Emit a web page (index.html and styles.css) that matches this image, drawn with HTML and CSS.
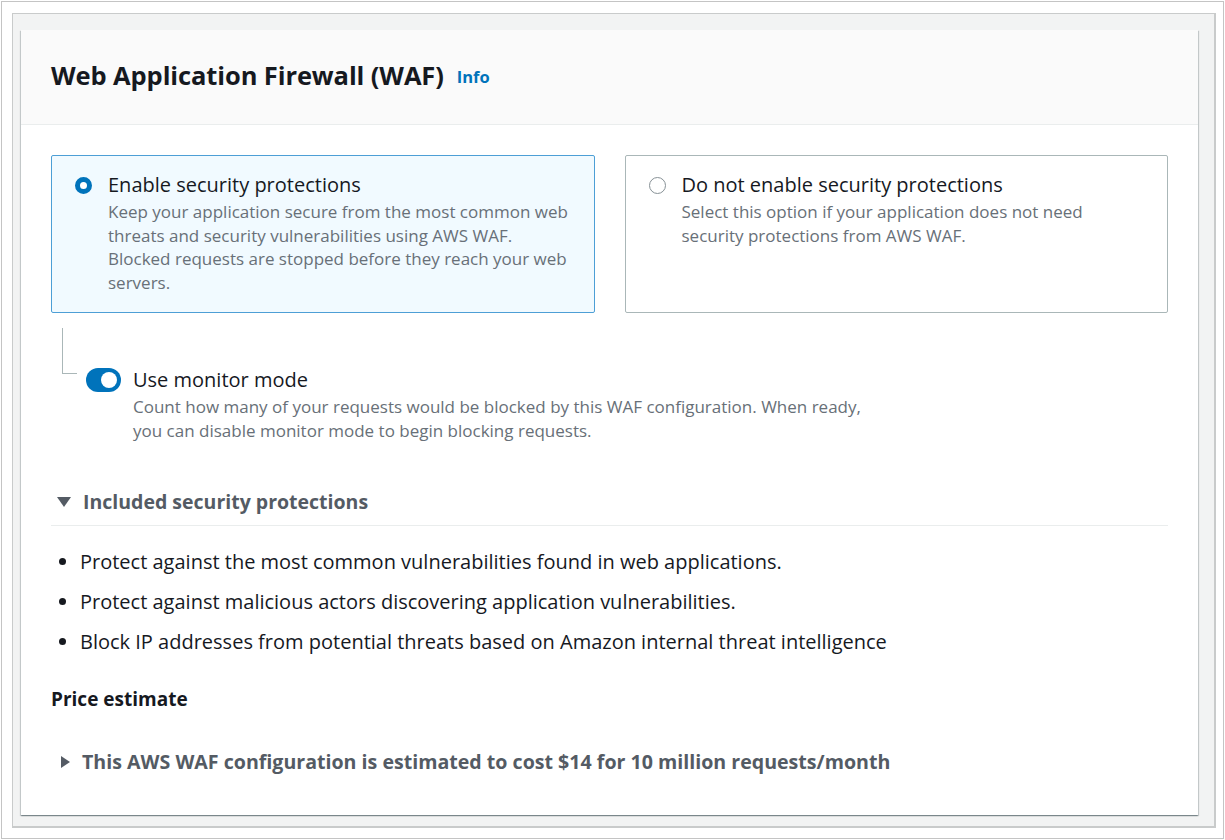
FILE: index.html
```html
<!DOCTYPE html>
<html lang="en">
<head>
<meta charset="utf-8">
<title>Web Application Firewall (WAF)</title>
<link rel="stylesheet" href="styles.css">
</head>
<body>
<div class="frame">
  <div class="panel">
    <section class="card">
      <header class="card-header">
        <h2 class="title">Web Application Firewall (WAF)</h2>
        <a class="info" href="#">Info</a>
      </header>
      <div class="card-body">
        <div class="tiles">
          <div class="tile selected">
            <span class="radio checked"></span>
            <div class="tile-text">
              <div class="tile-label">Enable security protections</div>
              <div class="tile-desc">Keep your application secure from the most common web threats and security vulnerabilities using AWS WAF. Blocked requests are stopped before they reach your web servers.</div>
            </div>
          </div>
          <div class="tile">
            <span class="radio"></span>
            <div class="tile-text">
              <div class="tile-label">Do not enable security protections</div>
              <div class="tile-desc">Select this option if your application does not need security protections from AWS WAF.</div>
            </div>
          </div>
        </div>

        <div class="monitor">
          <div class="connector"></div>
          <div class="monitor-row">
            <span class="toggle"><span class="knob"></span></span>
            <div class="monitor-text">
              <div class="monitor-label">Use monitor mode</div>
              <div class="monitor-desc">Count how many of your requests would be blocked by this WAF configuration. When ready, you can disable monitor mode to begin blocking requests.</div>
            </div>
          </div>
        </div>

        <div class="expander open">
          <span class="caret down"></span>
          <span class="expander-title">Included security protections</span>
        </div>
        <ul class="bullets">
          <li>Protect against the most common vulnerabilities found in web applications.</li>
          <li>Protect against malicious actors discovering application vulnerabilities.</li>
          <li>Block IP addresses from potential threats based on Amazon internal threat intelligence</li>
        </ul>

        <h3 class="price-title">Price estimate</h3>
        <div class="expander closed">
          <span class="caret right"></span>
          <span class="expander-title">This AWS WAF configuration is estimated to cost $14 for 10 million requests/month</span>
        </div>
      </div>
    </section>
  </div>
</div>
</body>
</html>
```

FILE: styles.css
```css
* { box-sizing: border-box; }
html, body { margin: 0; padding: 0; background: #ffffff; }
body {
  font-family: "Open Sans", "Liberation Sans", Arial, sans-serif;
  color: #16191f;
}
.frame {
  margin: 1px;
  width: 1223px;
  height: 838px;
  border: 1px solid #c4c4c4;
  padding: 11px 7px 11px 10px;
}
.panel {
  background: #f2f3f3;
  border: 1px solid #c9cbcb;
  border-width: 1px 2px 2px 1px;
  height: 815px;
  padding: 16px 16px 10px 8px;
}
.card {
  background: #ffffff;
  height: 785px;
  box-shadow: 0 1px 1px 0 rgba(0, 28, 36, 0.3), 1px 1px 1px 0 rgba(0, 28, 36, 0.15), -1px 1px 1px 0 rgba(0, 28, 36, 0.15);
}
.card-header {
  height: 95px;
  background: #fafafa;
  border-bottom: 1px solid #eaeded;
  display: flex;
  align-items: center;
  padding: 0 30px 4px 30px;
}
.title {
  margin: 0;
  font-size: 25.5px;
  font-weight: 700;
  color: #16191f;
  letter-spacing: -0.1px;
}
.info {
  margin-left: 13px;
  margin-top: 3px;
  font-size: 16.5px;
  font-weight: 700;
  color: #0073bb;
  text-decoration: none;
}
.card-body {
  padding: 30px 30px 0 30px;
}
.tiles {
  display: flex;
  gap: 30px;
}
.tile {
  flex: 1;
  height: 158px;
  border: 1px solid #aab7b8;
  border-radius: 2px;
  background: #ffffff;
  display: flex;
  align-items: flex-start;
  padding: 15px 20px 16px 23px;
}
.tile.selected {
  background: #f1faff;
  border-color: #4d9fd6;
}
.radio {
  flex-shrink: 0;
  width: 17px;
  height: 17px;
  border-radius: 50%;
  border: 1.5px solid #879196;
  background: #fff;
  margin-top: 6px;
  margin-right: 16px;
}
.radio.checked {
  border: 5px solid #0073bb;
}
.tile-label {
  font-size: 20px;
  line-height: 28px;
  color: #16191f;
}
.tile-desc {
  margin-top: 1px;
  font-size: 17px;
  line-height: 23.7px;
  color: #687078;
}
.monitor {
  display: flex;
  align-items: flex-start;
  margin-top: 15px;
  padding-left: 11px;
}
.connector {
  flex-shrink: 0;
  width: 15px;
  height: 46px;
  border-left: 1px solid #aab7b8;
  border-bottom: 1px solid #aab7b8;
}
.monitor-row {
  display: flex;
  align-items: flex-start;
  margin-top: 39px;
  margin-left: 9px;
}
.toggle {
  flex-shrink: 0;
  width: 35px;
  height: 24px;
  border-radius: 12px;
  background: #0073bb;
  display: flex;
  align-items: center;
  justify-content: flex-end;
  padding: 0 4px;
  margin-right: 12px;
  margin-top: 1px;
}
.knob {
  width: 16px;
  height: 16px;
  border-radius: 50%;
  background: #ffffff;
}
.monitor-label {
  font-size: 20px;
  line-height: 26px;
  color: #16191f;
}
.monitor-desc {
  margin-top: 2px;
  font-size: 17px;
  line-height: 24px;
  color: #687078;
  width: 745px;
}
.expander {
  display: flex;
  align-items: center;
  font-weight: 700;
  color: #545b64;
  line-height: 26px;
}
.expander.open {
  font-size: 19.5px;
  margin-top: 46px;
  padding-bottom: 10px;
  border-bottom: 1px solid #eaeded;
  padding-left: 6px;
}
.caret {
  flex-shrink: 0;
  width: 0;
  height: 0;
  margin-right: 12px;
}
.caret.down {
  border-left: 7px solid transparent;
  border-right: 7px solid transparent;
  border-top: 10px solid #545b64;
}
.caret.right {
  border-top: 6px solid transparent;
  border-bottom: 6px solid transparent;
  border-left: 9px solid #545b64;
}
.bullets {
  margin: 22px 0 0 0;
  padding: 0 0 0 29px;
  font-size: 20px;
  line-height: 28px;
  color: #16191f;
}
.bullets li {
  margin-bottom: 12px;
  padding-left: 0;
}
.price-title {
  margin: 30px 0 0 0;
  font-size: 19px;
  font-weight: 700;
  line-height: 26px;
  color: #16191f;
}
.expander.closed {
  font-size: 19.6px;
  margin-top: 37px;
  padding-left: 10px;
}
```
